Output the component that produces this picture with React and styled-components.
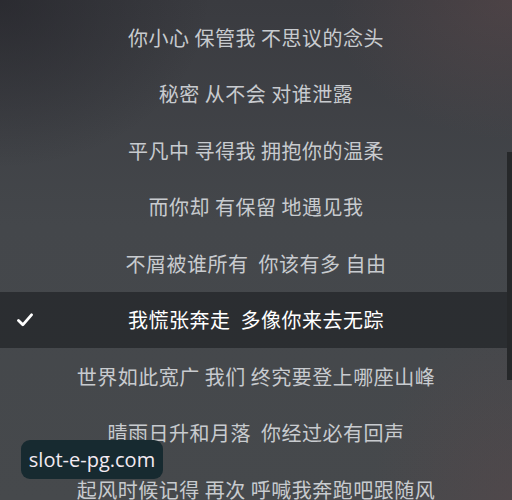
import React from "react";
import styled, { createGlobalStyle } from "styled-components";

const GlobalStyle = createGlobalStyle`
  html, body {
    margin: 0;
    padding: 0;
    background: #3d3f43;
  }
`;

const Screen = styled.div`
  position: relative;
  width: 512px;
  height: 500px;
  overflow: hidden;
  background:
    radial-gradient(ellipse 260px 200px at 100% 0%, rgba(110, 80, 80, 0.35), transparent 70%),
    radial-gradient(ellipse 200px 260px at 100% 100%, rgba(100, 70, 72, 0.3), transparent 70%),
    radial-gradient(ellipse 300px 240px at 0% 0%, rgba(30, 30, 36, 0.55), transparent 70%),
    linear-gradient(180deg, #3a3b40 0%, #44474b 45%, #46494c 100%);
  font-family: "Noto Sans CJK SC", "Noto Sans", sans-serif;
`;

const LyricList = styled.div`
  display: flex;
  flex-direction: column;
  padding-top: 9px;
`;

const LyricRow = styled.div`
  position: relative;
  height: 56.5px;
  display: flex;
  align-items: center;
  justify-content: center;
  font-size: 20px;
  letter-spacing: 0.5px;
  white-space: pre;
  color: ${(p) => (p.$active ? "#ffffff" : "#c8cbcf")};
  background: ${(p) => (p.$active ? "rgba(36, 38, 42, 0.78)" : "transparent")};
`;

const Check = styled.span`
  position: absolute;
  left: 17px;
  top: 50%;
  transform: translateY(-50%);
  display: flex;
`;

const ScrollBar = styled.div`
  position: absolute;
  right: 0;
  top: 152px;
  width: 5px;
  height: 228px;
  background: #26282a;
`;

const Watermark = styled.div`
  position: absolute;
  left: 21px;
  top: 440px;
  width: 142px;
  height: 39px;
  border-radius: 9px;
  background: #172a30;
  display: flex;
  align-items: center;
  justify-content: center;
  font-family: "Open Sans", "Noto Sans", sans-serif;
  font-size: 20px;
  color: #f3eaf2;
`;

const lyrics = [
  "你小心 保管我 不思议的念头",
  "秘密 从不会 对谁泄露",
  "平凡中 寻得我 拥抱你的温柔",
  "而你却 有保留 地遇见我",
  "不屑被谁所有  你该有多 自由",
  "我慌张奔走  多像你来去无踪",
  "世界如此宽广 我们 终究要登上哪座山峰",
  "晴雨日升和月落  你经过必有回声",
  "起风时候记得 再次 呼喊我奔跑吧跟随风",
];

const ACTIVE = 5;

export default function App() {
  return (
    <>
      <GlobalStyle />
      <Screen>
        <LyricList>
          {lyrics.map((line, i) => (
            <LyricRow key={i} $active={i === ACTIVE}>
              {i === ACTIVE && (
                <Check>
                  <svg width="16" height="14" viewBox="0 0 16 14">
                    <path
                      d="M1.5 7.5 L5.8 11.8 L14.5 1.8"
                      fill="none"
                      stroke="#ffffff"
                      strokeWidth="2.8"
                      strokeLinecap="round"
                      strokeLinejoin="round"
                    />
                  </svg>
                </Check>
              )}
              {line}
            </LyricRow>
          ))}
        </LyricList>
        <ScrollBar />
        <Watermark>slot-e-pg.com</Watermark>
      </Screen>
    </>
  );
}
